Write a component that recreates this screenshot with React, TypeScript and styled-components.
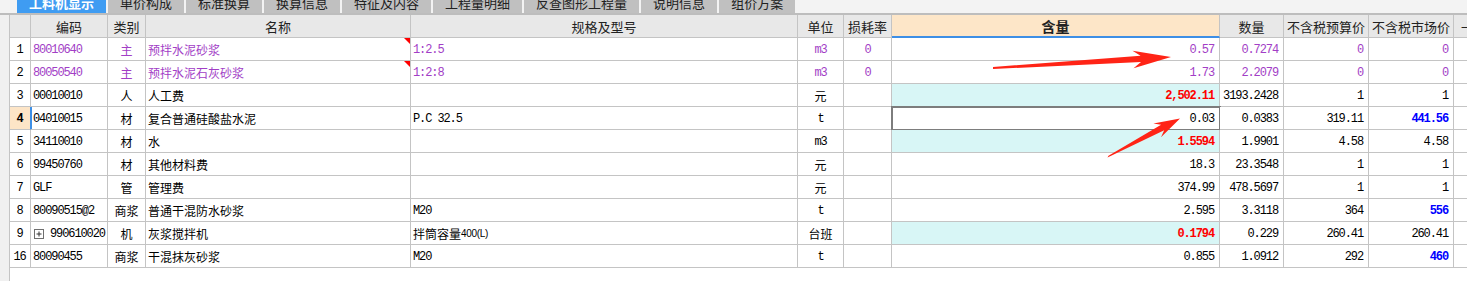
import React from 'react'
import styled, { createGlobalStyle, css } from 'styled-components'

const GlobalStyle = createGlobalStyle`
  html, body { margin: 0; padding: 0; background: #fff; }
  body {
    width: 1467px;
    height: 281px;
    overflow: hidden;
    font-family: "Noto Sans CJK SC", sans-serif;
  }
`

const COLS = [21, 77, 38, 265, 387, 46, 48, 328, 64, 85, 85, 120]

const PURPLE = '#a23ec6'
const RED = '#ff0000'
const BLUE = '#0000ff'
const CYAN = '#d8f6f6'
const PEACH = '#fde5c7'
const LINE = '#c4c4c4'

const monoFont = css`
  font-family: "Liberation Mono", "DejaVu Sans Mono", monospace;
  font-size: 12px;
  letter-spacing: -1.1px;
`
const cjkFont = css`
  font-family: "Noto Sans CJK SC", sans-serif;
  font-size: 12px;
`

const isAscii = (s: string) => /^[\x00-\x7f]*$/.test(s)

type Align = 'left' | 'center' | 'right'

interface Row {
  no: string
  code: string
  kind: string
  name: string
  spec: React.ReactNode
  unit: string
  loss: string
  qty: string
  amount: string
  budget: string
  market: string
  purple?: boolean
  qtyRed?: boolean
  marketBlue?: boolean
  flag?: boolean
  selected?: boolean
  expand?: boolean
}

const rows: Row[] = [
  { no: '1', code: '80010640', kind: '主', name: '预拌水泥砂浆', spec: '1:2.5', unit: 'm3', loss: '0', qty: '0.57', amount: '0.7274', budget: '0', market: '0', purple: true, flag: true },
  { no: '2', code: '80050540', kind: '主', name: '预拌水泥石灰砂浆', spec: '1:2:8', unit: 'm3', loss: '0', qty: '1.73', amount: '2.2079', budget: '0', market: '0', purple: true, flag: true },
  { no: '3', code: '00010010', kind: '人', name: '人工费', spec: '', unit: '元', loss: '', qty: '2,502.11', amount: '3193.2428', budget: '1', market: '1', qtyRed: true },
  { no: '4', code: '04010015', kind: '材', name: '复合普通硅酸盐水泥', spec: 'P.C 32.5', unit: 't', loss: '', qty: '0.03', amount: '0.0383', budget: '319.11', market: '441.56', marketBlue: true, selected: true },
  { no: '5', code: '34110010', kind: '材', name: '水', spec: '', unit: 'm3', loss: '', qty: '1.5594', amount: '1.9901', budget: '4.58', market: '4.58', qtyRed: true },
  { no: '6', code: '99450760', kind: '材', name: '其他材料费', spec: '', unit: '元', loss: '', qty: '18.3', amount: '23.3548', budget: '1', market: '1' },
  { no: '7', code: 'GLF', kind: '管', name: '管理费', spec: '', unit: '元', loss: '', qty: '374.99', amount: '478.5697', budget: '1', market: '1' },
  { no: '8', code: '80090515@2', kind: '商浆', name: '普通干混防水砂浆', spec: 'M20', unit: 't', loss: '', qty: '2.595', amount: '3.3118', budget: '364', market: '556', marketBlue: true },
  { no: '9', code: '990610020', kind: '机', name: '灰浆搅拌机', spec: 'MIXED', unit: '台班', loss: '', qty: '0.1794', amount: '0.229', budget: '260.41', market: '260.41', qtyRed: true, expand: true },
  { no: '16', code: '80090455', kind: '商浆', name: '干混抹灰砂浆', spec: 'M20', unit: 't', loss: '', qty: '0.855', amount: '1.0912', budget: '292', market: '460', marketBlue: true },
]

const tabs = ['工料机显示', '单价构成', '标准换算', '换算信息', '特征及内容', '工程量明细', '反查图形工程量', '说明信息', '组价方案']

export default function App() {
  return (
    <>
      <GlobalStyle />
      <Page>
        <TabBar>
          {tabs.map((t, i) => (
            <Tab key={t} $active={i === 0}>{t}</Tab>
          ))}
        </TabBar>
        <Body>
          <LeftStrip />
          <Grid>
            <HeadCell />
            <HeadCell>编码</HeadCell>
            <HeadCell>类别</HeadCell>
            <HeadCell>名称</HeadCell>
            <HeadCell>规格及型号</HeadCell>
            <HeadCell>单位</HeadCell>
            <HeadCell>损耗率</HeadCell>
            <HeadCell $active>含量</HeadCell>
            <HeadCell>数量</HeadCell>
            <HeadCell>不含税预算价</HeadCell>
            <HeadCell>不含税市场价</HeadCell>
            <HeadCell $start>一</HeadCell>
            {rows.map(r => {
              const c = r.purple ? PURPLE : undefined
              return (
                <React.Fragment key={r.no}>
                  <NoCell $mono $align="center" $bg={r.selected ? PEACH : undefined} $bold={r.selected} $current={r.selected}>
                    {r.no}
                  </NoCell>
                  <Cell $mono $align="left" $color={c} $current={r.selected}>
                    {r.expand && (
                      <Expander viewBox="0 0 10 10">
                        <rect x="0.5" y="0.5" width="9" height="9" fill="#fff" stroke="#6f6f6f" />
                        <path d="M2.5 5h5M5 2.5v5" stroke="#333" strokeWidth="1" />
                      </Expander>
                    )}
                    {r.code}
                  </Cell>
                  <Cell $align="center" $color={c}>{r.kind}</Cell>
                  <Cell $align="left" $color={c} $flag={r.flag}>{r.name}</Cell>
                  {r.spec === 'MIXED' ? (
                    <Cell $align="left">
                      拌筒容量<SmallText>400(L)</SmallText>
                    </Cell>
                  ) : (
                    <Cell $mono $align="left" $color={c}>{r.spec}</Cell>
                  )}
                  <Cell $mono={isAscii(r.unit)} $align="center" $color={c}>{r.unit}</Cell>
                  <Cell $mono $align="center" $color={c}>{r.loss}</Cell>
                  <Cell
                    $mono
                    $align="right"
                    $color={r.qtyRed ? RED : c}
                    $bold={r.qtyRed}
                    $bg={r.qtyRed ? CYAN : undefined}
                    $selected={r.selected}
                  >
                    {r.qty}
                  </Cell>
                  <Cell $mono $align="right" $color={c}>{r.amount}</Cell>
                  <Cell $mono $align="right" $color={c}>{r.budget}</Cell>
                  <Cell $mono $align="right" $color={r.marketBlue ? BLUE : c} $bold={r.marketBlue}>{r.market}</Cell>
                  <Cell />
                </React.Fragment>
              )
            })}
          </Grid>
        </Body>
        <Arrows width="1467" height="281" viewBox="0 0 1467 281">
          <polygon
            fill="#ff2416"
            points="993,69 1141,62 1133.5,68.2 1171,57 1132.5,50.8 1140.6,55.8 993,67"
          />
          <polygon
            fill="#ff2416"
            points="1107.5,157.5 1164.2,130.2 1161,137.2 1180,118.5 1153.4,123.4 1161.1,124.8 1108.5,155.8"
          />
        </Arrows>
      </Page>
    </>
  )
}

const Page = styled.div`
  position: relative;
  width: 1467px;
  height: 281px;
  display: flex;
  flex-direction: column;
  background: #fff;
`

const TabBar = styled.div`
  height: 13px;
  flex: none;
  display: flex;
  align-items: flex-end;
  gap: 2px;
  padding-left: 17px;
  background: #f3f3f3;
  overflow: hidden;
`

const Tab = styled.div<{ $active?: boolean }>`
  height: 21px;
  flex: none;
  display: flex;
  align-items: center;
  padding: 0 12px;
  font-family: "Noto Sans CJK SC", sans-serif;
  font-size: 13px;
  font-weight: ${p => (p.$active ? 700 : 400)};
  color: ${p => (p.$active ? '#fff' : '#222')};
  background: ${p => (p.$active ? '#3f9cf2' : '#c0c0c0')};
`

const Body = styled.div`
  flex: 1;
  display: flex;
  border-top: 2px solid #bdbdbd;
  overflow: hidden;
`

const LeftStrip = styled.div`
  width: 9px;
  flex: none;
  background: #f0f0f0;
  border-right: 1px solid ${LINE};
`

const Grid = styled.div`
  flex: none;
  display: grid;
  grid-template-columns: ${COLS.map(w => `${w}px`).join(' ')};
  grid-auto-rows: 23px;
  align-content: start;
`

interface CellProps {
  $align?: Align
  $mono?: boolean
  $color?: string
  $bg?: string
  $bold?: boolean
  $flag?: boolean
  $selected?: boolean
  $current?: boolean
}

const Cell = styled.div<CellProps>`
  box-sizing: border-box;
  position: relative;
  display: flex;
  align-items: center;
  justify-content: ${p =>
    p.$align === 'right' ? 'flex-end' : p.$align === 'center' ? 'center' : 'flex-start'};
  padding: 1px ${p => (p.$align === 'right' ? '5px' : '0')} 0 ${p => (p.$align === 'left' ? '2px' : '0')};
  border-right: 1px solid ${LINE};
  border-bottom: 1px solid ${LINE};
  background: ${p => p.$bg ?? '#fff'};
  color: ${p => p.$color ?? '#000'};
  font-weight: ${p => (p.$bold ? 700 : 400)};
  white-space: nowrap;
  overflow: hidden;
  ${p => (p.$mono ? monoFont : cjkFont)}
  ${p =>
    p.$current &&
    css`
      box-shadow: inset 1px 0 0 #3d8fe6;
    `}
  ${p =>
    p.$selected &&
    css`
      outline: 2px solid #7d7d7d;
      outline-offset: -1px;
    `}
  ${p =>
    p.$flag &&
    css`
      &::after {
        content: '';
        position: absolute;
        top: 0;
        right: 0;
        border-top: 6px solid #ff0000;
        border-left: 6px solid transparent;
      }
    `}
`

const NoCell = styled(Cell)`
  padding-right: 1px;
  ${p =>
    p.$current &&
    css`
      border-right-color: #3d8fe6;
      box-shadow: none;
    `}
`

const HeadCell = styled.div<{ $active?: boolean; $start?: boolean }>`
  box-sizing: border-box;
  display: flex;
  align-items: center;
  justify-content: ${p => (p.$start ? 'flex-start' : 'center')};
  padding-left: ${p => (p.$start ? '7px' : '0')};
  border-right: 1px solid ${LINE};
  border-bottom: ${p => (p.$active ? '2px solid #3d8fe6' : `1px solid ${LINE}`)};
  background: ${p => (p.$active ? '#fde6c8' : '#e8e8e8')};
  font-family: "Noto Sans CJK SC", sans-serif;
  font-size: ${p => (p.$active ? '14px' : '13px')};
  font-weight: ${p => (p.$active ? 700 : 400)};
  color: #222;
  white-space: nowrap;
  overflow: hidden;
`

const Expander = styled.svg`
  width: 10px;
  height: 10px;
  margin: 0 6px 0 1px;
  flex: none;
`

const SmallText = styled.span`
  font-family: "Liberation Sans Narrow", "Liberation Sans", sans-serif;
  font-size: 10px;
  letter-spacing: -0.3px;
`

const Arrows = styled.svg`
  position: absolute;
  top: 0;
  left: 0;
  pointer-events: none;
`
